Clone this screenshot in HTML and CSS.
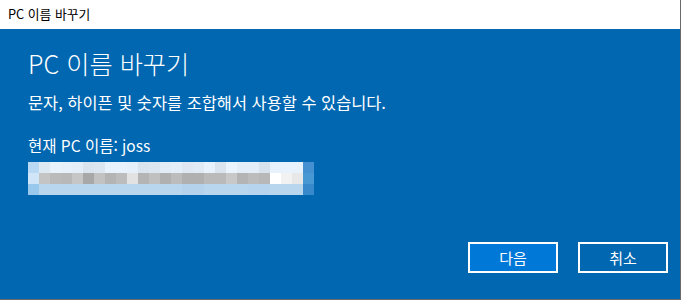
FILE: index.html
```html
<!DOCTYPE html>
<html lang="ko">
<head>
    <meta charset="UTF-8">
    <meta name="viewport" content="width=device-width, initial-scale=1.0">
    <title>PC 이름 바꾸기</title>
    <link rel="stylesheet" href="styles.css">
</head>
<body>
    <div class="window">
        <div class="titlebar">PC 이름 바꾸기</div>

        <div class="dialog">
            <div class="content">
                <h1>PC 이름 바꾸기</h1>
                <p class="hint">문자, 하이픈 및 숫자를 조합해서 사용할 수 있습니다.</p>
                <div class="current">현재 PC 이름: joss</div>
                <div class="mosaic" id="mosaic"></div>
            </div>

            <div class="actions">
                <button class="btn btn-primary">다음</button>
                <button class="btn">취소</button>
            </div>
        </div>
    </div>

    <script>
        // 입력란 캡처를 모자이크 처리한 색상 (3줄 x 26칸)
        const rows = [
            ['#b8d8f4', '#dce8f2', '#e8f2fa', '#e6f0fa', '#e4eef8', '#dae4ee', '#dce6f0', '#e8f2fc', '#e8f2fc',
             '#e6f0fa', '#dae4ee', '#dce6f0', '#e2ecf6', '#e4eef8', '#dfe8f2', '#e0eaf4', '#e8f2fc', '#dae4ee',
             '#eaf4fc', '#e4eef8', '#e4eef8', '#d8e2ec', '#e8f2fc', '#e8f2fc', '#e8f2fc', '#4490d0'],
            ['#d0e6f8', '#c4c4c4', '#bababa', '#b8b8b8', '#c6c6c6', '#a8a8a8', '#c2c2c2', '#b4b4b4', '#bcbcbc',
             '#e2e2e2', '#b4b4b4', '#c0c0c0', '#b0b0b0', '#bcbcbc', '#b0b0b0', '#b0b0b0', '#bababa', '#bababa',
             '#c8c8c8', '#b4b4b4', '#bcbcbc', '#b8b8b8', '#ffffff', '#f2f2f2', '#e8e8e8', '#4898d4'],
            ['#98c8ec', '#b8d6ee', '#b8d6ee', '#b8d6ee', '#b8d6ee', '#b8d6ee', '#b8d6ee', '#b8d6ee', '#b8d6ee',
             '#b8d6ee', '#b8d6ee', '#b8d6ee', '#b8d6ee', '#b8d6ee', '#b4d2ec', '#b4d2ec', '#b8d6ee', '#b8d6ee',
             '#b8d6ee', '#b8d6ee', '#b6d4ee', '#b6d4ee', '#b8d6ee', '#b8d6ee', '#b8d6ee', '#3888cc']
        ];

        const mosaic = document.getElementById('mosaic');
        rows.forEach(row => {
            row.forEach(color => {
                const cell = document.createElement('div');
                cell.className = 'cell';
                cell.style.background = color;
                mosaic.appendChild(cell);
            });
        });
    </script>
</body>
</html>
```

FILE: styles.css
```css
:root {
    --accent: #0067b0;
    --accent-light: #0078d7;
    --frame: #6a6a6a;
}

body {
    margin: 0;
    padding: 0;
    font-family: 'Noto Sans CJK KR', 'Noto Sans', sans-serif;
    background: #ffffff;
}

.window {
    width: 680px;
    height: 299px;
    display: flex;
    flex-direction: column;
    border-right: 1px solid var(--frame);
    border-bottom: 1px solid var(--frame);
}

.titlebar {
    height: 29px;
    line-height: 28px;
    padding-left: 8px;
    font-size: 12.8px;
    color: #000;
    background: #fff;
}

.dialog {
    flex: 1;
    display: flex;
    flex-direction: column;
    background: var(--accent);
    color: #fff;
}

.content {
    flex: 1;
    padding: 0 28px;
}

h1 {
    margin: 18px 0 0;
    font-size: 25.2px;
    line-height: 32px;
    font-weight: 300;
}

.hint {
    margin: 12px 0 0;
    font-size: 16.4px;
    line-height: 22px;
}

.current {
    margin-top: 21px;
    font-size: 15.5px;
    line-height: 22px;
}

.mosaic {
    margin-top: 6px;
    width: 286px;
    display: grid;
    grid-template-columns: repeat(26, 11px);
    grid-auto-rows: 11px;
}

.actions {
    display: flex;
    justify-content: flex-end;
    gap: 20px;
    padding: 0 12px 26px 0;
}

.btn {
    width: 90px;
    height: 31px;
    padding: 0;
    border: 2px solid #fff;
    background: var(--accent);
    color: #fff;
    font-family: inherit;
    font-size: 15px;
    cursor: pointer;
}

.btn-primary {
    background: var(--accent-light);
}
```
